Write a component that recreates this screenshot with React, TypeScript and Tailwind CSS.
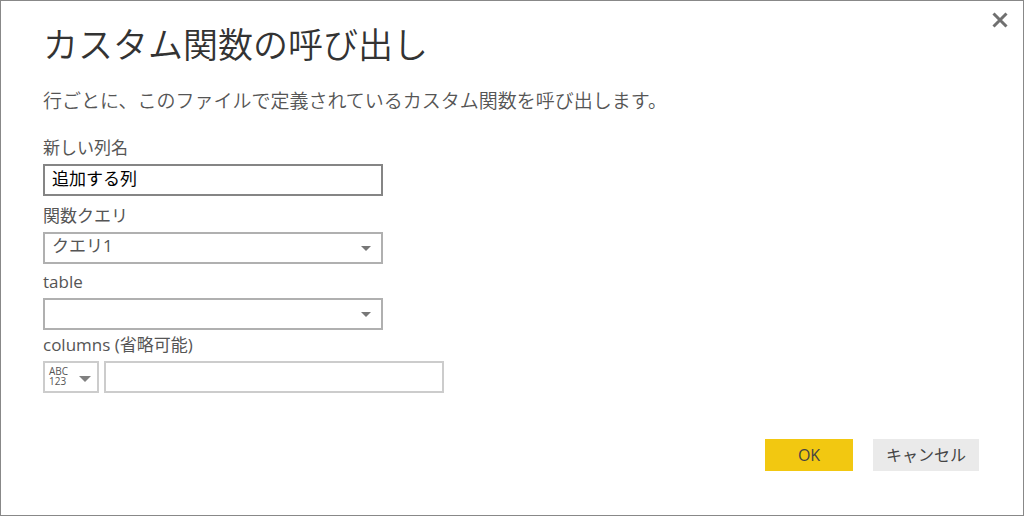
import React from "react";

type FieldProps = {
  id: string;
  label: string;
  className?: string;
  children: React.ReactNode;
};

const Field: React.FC<FieldProps> = ({ id, label, className, children }) => {
  return (
    <div className={className}>
      <label htmlFor={id} className="mb-1 block text-[17px] leading-6">
        {label}
      </label>
      {children}
    </div>
  );
};

type DropdownProps = {
  id: string;
  options: string[];
};

const Dropdown: React.FC<DropdownProps> = ({ id, options }) => {
  return (
    <div className="relative w-full max-w-[340px]">
      <select
        id={id}
        className="block h-8 w-full appearance-none border-2 border-[#b0b0b0] bg-white pr-8 pb-1 pl-[7px] text-[17px] leading-6 outline-none"
      >
        {options.map((option) => (
          <option key={option}>{option}</option>
        ))}
      </select>
      <svg
        viewBox="0 0 10 5"
        className="pointer-events-none absolute top-3.5 right-3 h-[5px] w-2.5 fill-[#777777]"
        aria-hidden="true"
      >
        <path d="M0 0h10L5 5z" />
      </svg>
    </div>
  );
};

const App: React.FC = () => {
  return (
    <div
      role="dialog"
      aria-labelledby="dialog-title"
      className="flex min-h-screen flex-col border border-[#888888] bg-white pr-11 pb-11 pl-[42px] font-['Open_Sans','Noto_Sans_CJK_JP',sans-serif] text-[#555555]"
    >
      <header className="-mr-8 flex items-start justify-between">
        <h1
          id="dialog-title"
          className="pt-5 text-[35px] leading-12 font-[350] text-[#333333]"
        >
          カスタム関数の呼び出し
        </h1>
        <button type="button" aria-label="閉じる" className="-mr-px mt-[7px] p-1">
          <svg
            viewBox="0 0 16 16"
            className="size-4 stroke-[#707070] stroke-3"
            aria-hidden="true"
          >
            <path d="M1.5 1.5l13 13M14.5 1.5l-13 13" />
          </svg>
        </button>
      </header>

      <p className="mt-4 text-[19px] leading-8 font-[350]">
        行ごとに、このファイルで定義されているカスタム関数を呼び出します。
      </p>

      <form className="mt-[19px] flex flex-1 flex-col">
        <Field id="column-name" label="新しい列名">
          <input
            id="column-name"
            type="text"
            defaultValue="追加する列"
            className="block h-8 w-full max-w-[340px] border-2 border-[#858585] px-[7px] pb-1.5 text-[17px] leading-6 text-black outline-none"
          />
        </Field>

        <Field id="function-query" label="関数クエリ" className="mt-2">
          <Dropdown id="function-query" options={["クエリ1"]} />
        </Field>

        <Field id="table" label="table" className="mt-1.5">
          <Dropdown id="table" options={[""]} />
        </Field>

        <Field id="columns" label="columns (省略可能)" className="mt-[3px]">
          <div className="flex gap-[5px]">
            <button
              type="button"
              aria-haspopup="listbox"
              className="flex h-8 w-14 items-center justify-between border-2 border-[#cccccc] pr-1.5 pb-0.5 pl-1"
            >
              <span className="text-left font-['Open_Sans',sans-serif] text-[10px] leading-[10px]">
                ABC
                <br />
                123
              </span>
              <svg
                viewBox="0 0 12 6"
                className="mt-1.5 h-1.5 w-3 fill-[#808080]"
                aria-hidden="true"
              >
                <path d="M0 0h12L6 6z" />
              </svg>
            </button>
            <input
              id="columns"
              type="text"
              className="block h-8 w-full max-w-[340px] border-2 border-[#cccccc] px-[7px] text-[17px] leading-6 outline-none"
            />
          </div>
        </Field>

        <div className="mt-auto flex items-end justify-end gap-5">
          <button
            type="submit"
            className="h-8 w-[88px] bg-[#f2c811] text-base text-[#444444]"
          >
            OK
          </button>
          <button
            type="button"
            className="h-8 w-[106px] bg-[#eaeaea] text-base text-[#444444]"
          >
            キャンセル
          </button>
        </div>
      </form>
    </div>
  );
};

export default App;
